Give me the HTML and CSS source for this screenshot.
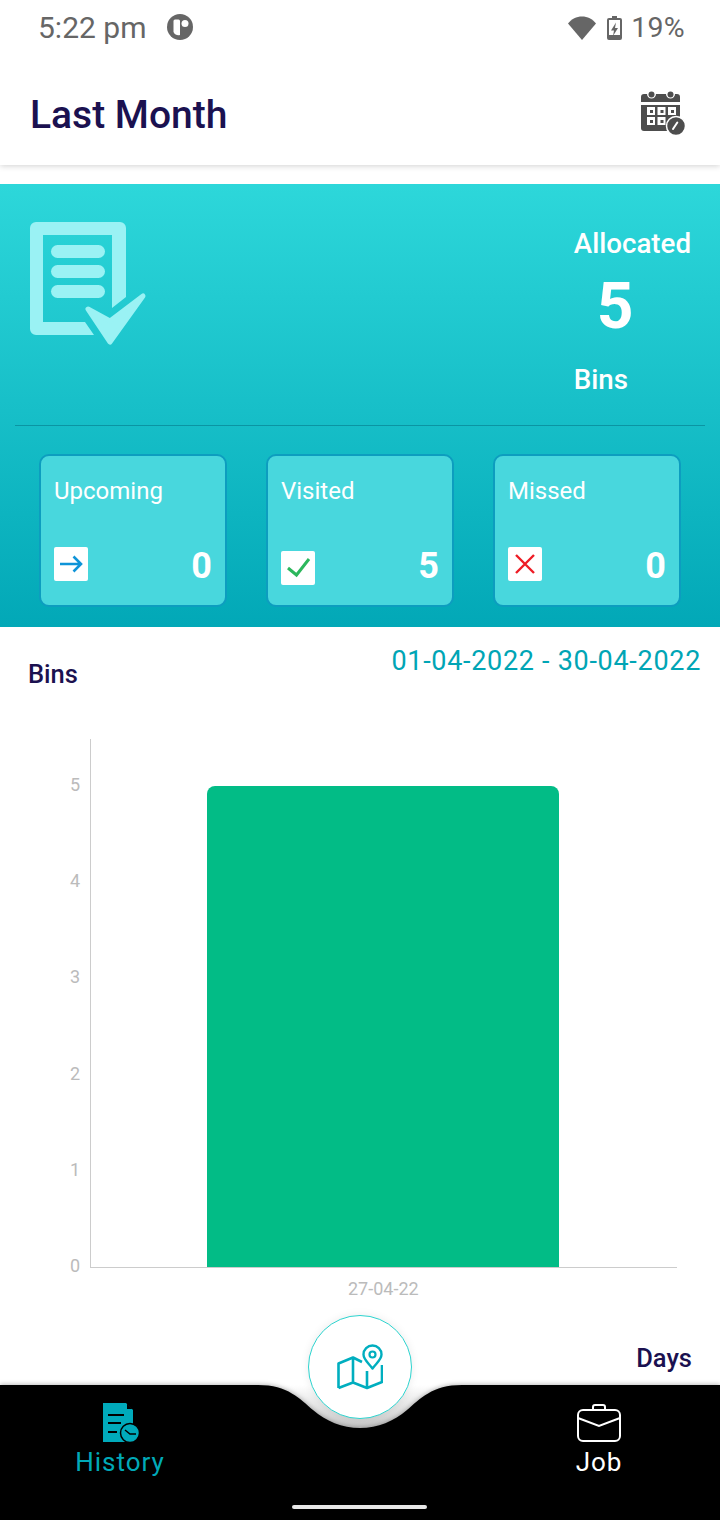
FILE: index.html
```html
<!DOCTYPE html>
<html lang="en">
<head>
  <meta charset="UTF-8">
  <meta name="viewport" content="width=device-width, initial-scale=1.0">
  <title>Last Month</title>
  <link rel="stylesheet" href="styles.css">
</head>
<body>
  <div class="page">
    <header class="app-header">
      <div class="status-bar">
        <span class="status-time">5:22 pm</span>
        <svg class="status-app" viewBox="0 0 26 26">
          <circle cx="13" cy="13" r="13" fill="#666"/>
          <path d="M8 5.500h3.500a1.500 1.500 0 0 1 1.500 1.500v14a6 6 0 0 1-6.500-3V7a1.500 1.500 0 0 1 1.500-1.500z" fill="#fff"/>
          <circle cx="18" cy="9.500" r="3.500" fill="#fff"/>
        </svg>
        <span class="status-right">
          <svg class="status-wifi" viewBox="0 0 28 24"><path d="M0 7.500C3.500 3 8.500 0.500 14 0.500S24.500 3 28 7.500L14 24z" fill="#666"/></svg>
          <svg class="status-battery" viewBox="0 0 15 24">
            <path fill-rule="evenodd" fill="#666" d="M5 0h5v2h3a2 2 0 0 1 2 2v18a2 2 0 0 1-2 2H2a2 2 0 0 1-2-2V4a2 2 0 0 1 2-2h3zM2 4v15h11V4z"/>
            <path fill="#666" d="M9 6.500L4 14.500H7L6 20L11 12H8z"/>
          </svg>
          <span class="status-percent">19%</span>
        </span>
      </div>
      <div class="title-bar">
        <h1 class="title">Last Month</h1>
        <svg class="calendar-icon" viewBox="0 0 45 45">
          <path fill="#4d4d4d" d="M3 3h3a4.500 4.500 0 0 0 9 0h10a4.500 4.500 0 0 0 9 0h2a3 3 0 0 1 3 3v5H0V6a3 3 0 0 1 3-3z"/>
          <circle cx="10.500" cy="3.500" r="3" fill="#4d4d4d"/>
          <circle cx="29.500" cy="3.500" r="3" fill="#4d4d4d"/>
          <path fill="#4d4d4d" d="M0 14h39v23a3 3 0 0 1-3 3H3a3 3 0 0 1-3-3z"/>
          <g fill="#fff">
            <rect x="6" y="16" width="8" height="8"/><rect x="16.500" y="16" width="8" height="8"/><rect x="27" y="16" width="8" height="8"/>
            <rect x="6" y="26" width="8" height="8"/><rect x="16.500" y="26" width="8" height="8"/>
          </g>
          <g fill="#4d4d4d">
            <rect x="9" y="19" width="3" height="3"/><rect x="19.500" y="19" width="3" height="3"/><rect x="30" y="19" width="3" height="3"/>
            <rect x="9" y="29" width="3" height="3"/><rect x="19.500" y="29" width="3" height="3"/>
          </g>
          <circle cx="35" cy="35" r="9.500" fill="#4d4d4d" stroke="#fff" stroke-width="1.500"/>
          <path d="M32 38L36.300 31.500" stroke="#fff" stroke-width="2" stroke-linecap="round"/>
        </svg>
      </div>
    </header>

    <section class="hero">
      <div class="hero-top">
        <svg class="hero-icon" viewBox="0 0 117 124">
          <path fill="#9af2f4" fill-rule="evenodd" d="M6 0H90a6 6 0 0 1 6 6V75L82 86V13H13V100H55L64 113H6a6 6 0 0 1-6-6V6a6 6 0 0 1 6-6Z"/>
          <rect x="21" y="23" width="54" height="13" rx="6.500" fill="#9af2f4"/>
          <rect x="21" y="43" width="54" height="13" rx="6.500" fill="#9af2f4"/>
          <rect x="21" y="63" width="54" height="13" rx="6.500" fill="#9af2f4"/>
          <path d="M58 87L80 99L113 74L80 120Z" fill="#9af2f4" stroke="#9af2f4" stroke-width="5" stroke-linejoin="round"/>
        </svg>
        <div class="allocated">
          <div class="allocated-label">Allocated</div>
          <div class="allocated-count">5</div>
          <div class="allocated-unit">Bins</div>
        </div>
      </div>
      <div class="stat-row">
        <div class="stat-card">
          <div class="stat-label">Upcoming</div>
          <div class="stat-bottom">
            <span class="stat-icon">
              <svg viewBox="0 0 34 34"><path d="M6 17H27M19.500 9.500L27 17L19.500 24.500" fill="none" stroke="#0f94d8" stroke-width="2.600"/></svg>
            </span>
            <span class="stat-value">0</span>
          </div>
        </div>
        <div class="stat-card">
          <div class="stat-label">Visited</div>
          <div class="stat-bottom">
            <span class="stat-icon stat-icon-low">
              <svg viewBox="0 0 34 34"><path d="M7 17L15.500 24L28 8" fill="none" stroke="#2cb75c" stroke-width="3"/></svg>
            </span>
            <span class="stat-value">5</span>
          </div>
        </div>
        <div class="stat-card">
          <div class="stat-label">Missed</div>
          <div class="stat-bottom">
            <span class="stat-icon">
              <svg viewBox="0 0 34 34"><path d="M8 8L26 26M26 8L8 26" fill="none" stroke="#ee1c25" stroke-width="2.400"/></svg>
            </span>
            <span class="stat-value">0</span>
          </div>
        </div>
      </div>
    </section>

    <section class="chart">
      <div class="chart-head">
        <span class="axis-title">Bins</span>
        <span class="chart-range">01-04-2022 - 30-04-2022</span>
      </div>
      <div class="chart-body">
        <div class="y-ticks">
          <span>5</span><span>4</span><span>3</span><span>2</span><span>1</span><span>0</span>
        </div>
        <div class="plot"><div class="bar"></div></div>
      </div>
      <div class="x-label">27-04-22</div>
      <div class="chart-foot"><span class="axis-title">Days</span></div>
    </section>

    <nav class="bottom-nav">
      <svg class="nav-shape" viewBox="0 0 720 135">
        <defs>
          <linearGradient id="notchShade" x1="0" y1="0" x2="0" y2="1">
            <stop offset="0" stop-color="#fff"/>
            <stop offset="0.5" stop-color="#e2e2e2"/>
            <stop offset="1" stop-color="#c4c4c4"/>
          </linearGradient>
        </defs>
        <rect x="250" y="0" width="220" height="46" fill="url(#notchShade)"/>
        <path class="nav-fill" d="M0 0H258C288 0 300 14 313 25C326 36 342 43 360 43C378 43 394 36 407 25C420 14 432 0 462 0H720V135H0Z"/>
      </svg>
      <a class="nav-item nav-item-active">
        <svg class="nav-icon" viewBox="-2 0 38 40">
          <path fill="#00aabb" d="M0 0H23L30 7V39H0Z"/>
          <path fill="#000" d="M24 0.500L29.500 6H24Z"/>
          <path stroke="#000" stroke-width="2" d="M5 12H21M5 20H18M5 29H14"/>
          <circle cx="27" cy="30" r="9.500" fill="#00aabb" stroke="#000" stroke-width="1.500"/>
          <path d="M22 27L27 31H33" fill="none" stroke="#000" stroke-width="1.500"/>
        </svg>
        <span>History</span>
      </a>
      <a class="nav-item">
        <svg class="nav-icon" viewBox="0 0 44 38">
          <rect x="1" y="6" width="42" height="31" rx="5" fill="none" stroke="#fff" stroke-width="2"/>
          <path d="M16 6V3a2 2 0 0 1 2-2H26a2 2 0 0 1 2 2V6" fill="none" stroke="#fff" stroke-width="2"/>
          <path d="M1 14L22 22L43 14" fill="none" stroke="#fff" stroke-width="2"/>
        </svg>
        <span>Job</span>
      </a>
      <div class="home-bar"></div>
    </nav>

    <button class="map-button">
      <svg viewBox="0 0 46 46">
        <path d="M1.500 44V19.500L16 13.500L25 18M16 13.500V38.500M1.500 44L16 38.500L30 44L45 38V21M30 27V44" fill="none" stroke="#00aebf" stroke-width="2.600" stroke-linejoin="round"/>
        <path d="M35.500 24.500C31.500 19 26.500 15.500 26.500 10.500A9 9 0 0 1 44.500 10.500C44.500 15.500 39.500 19 35.500 24.500Z" fill="#fff" stroke="#00aebf" stroke-width="2.400" stroke-linejoin="round"/>
        <circle cx="35.500" cy="10.500" r="3" fill="none" stroke="#00aebf" stroke-width="2.200"/>
      </svg>
    </button>
  </div>
</body>
</html>
```

FILE: styles.css
```css
* {
  box-sizing: border-box;
}
body {
  margin: 0;
  padding: 0;
  font-family: Roboto, "Liberation Sans", sans-serif;
  background-color: #fff;
}
.page {
  position: relative;
  width: 720px;
  height: 1520px;
  display: flex;
  flex-direction: column;
  overflow: hidden;
}
.app-header {
  height: 165px;
  background-color: #fff;
  box-shadow: 0 1px 6px rgba(0, 0, 0, 0.18);
}
.status-bar {
  height: 55px;
  display: flex;
  align-items: center;
  padding: 0 35px 0 38px;
  color: #666;
}
.status-time {
  font-size: 30px;
}
.status-app {
  width: 26px;
  height: 26px;
  margin-left: 21px;
  margin-bottom: 2px;
}
.status-right {
  margin-left: auto;
  display: flex;
  align-items: center;
}
.status-wifi {
  width: 28px;
  height: 24px;
}
.status-battery {
  width: 15px;
  height: 24px;
  margin-left: 11px;
}
.status-percent {
  font-size: 28.5px;
  margin-left: 9px;
  letter-spacing: 0.3px;
}
.title-bar {
  height: 110px;
  display: flex;
  align-items: center;
  justify-content: space-between;
  padding: 0 34px 0 30px;
}
.title {
  margin: 10px 0 0;
  font-size: 39px;
  font-weight: 500;
  color: #1b1150;
}
.calendar-icon {
  width: 45px;
  height: 45px;
  margin-top: 7px;
}
.hero {
  height: 443px;
  margin-top: 19px;
  padding: 0 15px;
  background: linear-gradient(180deg, #2dd7da 0%, #02a8b7 100%);
}
.hero-top {
  height: 242px;
  display: flex;
  justify-content: space-between;
  padding: 38px 14px 0 15px;
  border-bottom: 1px solid #0b95a3;
}
.hero-icon {
  width: 117px;
  height: 124px;
}
.allocated {
  color: #fff;
  font-weight: 500;
  font-size: 27.7px;
  margin-top: 5px;
}
.allocated-count {
  font-size: 64px;
  font-weight: 700;
  line-height: 64px;
  padding-left: 23px;
  margin-top: 15px;
}
.allocated-unit {
  margin-top: 24px;
}
.stat-row {
  display: flex;
  justify-content: space-between;
  padding: 28px 24px 0;
}
.stat-card {
  width: 188px;
  height: 153px;
  padding: 21px 13px 0;
  background-color: #48d7dd;
  border: 2px solid #0d9dbf;
  border-radius: 10px;
  color: #fff;
}
.stat-label {
  font-size: 24px;
  line-height: 28px;
}
.stat-bottom {
  display: flex;
  justify-content: space-between;
  align-items: center;
  margin-top: 36px;
}
.stat-icon {
  width: 34px;
  height: 34px;
  background-color: #fff;
  border-radius: 2px;
}
.stat-icon svg {
  display: block;
  width: 34px;
  height: 34px;
}
.stat-icon-low {
  transform: translateY(4px);
}
.stat-value {
  font-size: 36px;
  font-weight: 700;
  padding-top: 4px;
}
.chart {
  flex: 1;
  display: flex;
  flex-direction: column;
}
.chart-head {
  display: flex;
  justify-content: space-between;
  padding: 18px 19px 0 28px;
}
.axis-title {
  font-size: 25.5px;
  font-weight: 500;
  color: #1b1150;
}
.chart-head .axis-title {
  margin-top: 14px;
}
.chart-range {
  font-size: 27px;
  letter-spacing: 0.7px;
  color: #00a5b5;
}
.chart-body {
  display: flex;
  height: 529px;
  margin-top: 50px;
}
.y-ticks {
  width: 90px;
  padding: 36px 10px 0 0;
  display: flex;
  flex-direction: column;
  align-items: flex-end;
  gap: 76.2px;
  font-size: 18px;
  line-height: 20px;
  color: #bbb;
}
.plot {
  width: 587px;
  height: 529px;
  display: flex;
  align-items: flex-end;
  padding-left: 116px;
  border-left: 1px solid #ccc;
  border-bottom: 1px solid #ccc;
}
.bar {
  width: 352px;
  height: 481px;
  background-color: #02bc86;
  border-radius: 8px 8px 0 0;
}
.x-label {
  margin-top: 10px;
  padding-left: 348px;
  font-size: 18px;
  line-height: 21px;
  color: #bbb;
}
.chart-foot {
  display: flex;
  justify-content: flex-end;
  padding: 44px 28px 0 0;
}
.bottom-nav {
  position: relative;
  height: 135px;
  display: flex;
  justify-content: space-between;
  padding: 18px 1px 0 0;
}
.nav-shape {
  position: absolute;
  top: 0;
  left: 0;
  width: 720px;
  height: 135px;
  overflow: visible;
}
.nav-fill {
  fill: #000;
  filter: drop-shadow(0 -1px 2px rgba(0, 0, 0, 0.25));
}
.nav-item {
  position: relative;
  width: 240px;
  display: flex;
  flex-direction: column;
  align-items: center;
  color: #fff;
  font-size: 26px;
  letter-spacing: 0.95px;
}
.nav-item-active {
  color: #00a9b8;
}
.nav-icon {
  height: 40px;
  width: 44px;
  margin-bottom: 4px;
}
.home-bar {
  position: absolute;
  left: 292px;
  bottom: 11px;
  width: 135px;
  height: 4px;
  border-radius: 2px;
  background-color: #e8e8e8;
}
.map-button {
  position: absolute;
  left: 308px;
  top: 1315px;
  width: 104px;
  height: 104px;
  padding: 0;
  display: flex;
  align-items: center;
  justify-content: center;
  background-color: #fff;
  border: 1px solid #2dd4cf;
  border-radius: 50%;
  box-shadow: 0 0 8px rgba(0, 0, 0, 0.08);
}
.map-button svg {
  width: 46px;
  height: 46px;
}
```
